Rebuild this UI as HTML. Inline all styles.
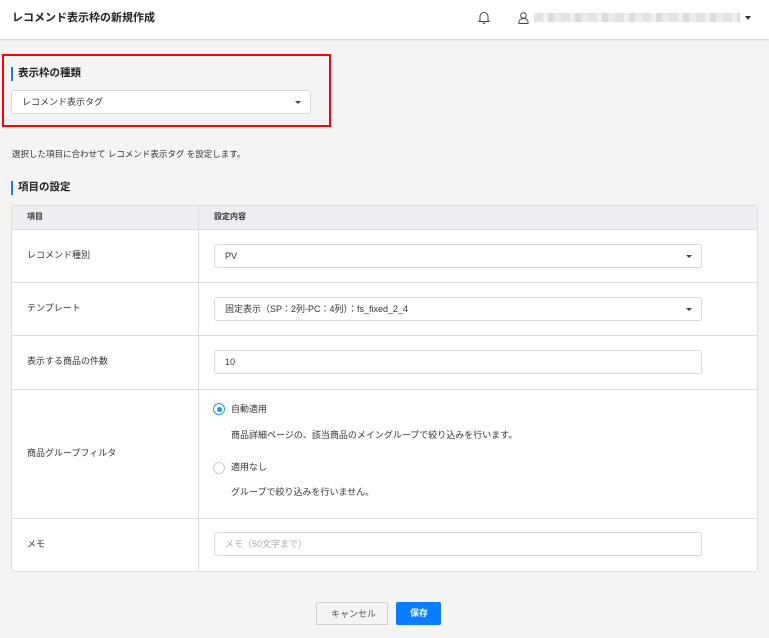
<!DOCTYPE html>
<html><head><meta charset="utf-8"><style>
*{box-sizing:border-box;margin:0;padding:0}
body{width:769px;height:638px;background:#f4f4f4;font-family:"Liberation Sans","Noto Sans CJK JP",sans-serif;color:#333;position:relative;overflow:hidden;font-size:9px}
.a{position:absolute}
.hdr{left:0;top:0;width:769px;height:39px;background:#fff;box-shadow:0 1px 2px rgba(0,0,0,.15)}
.t{white-space:nowrap;line-height:1}
.sel{background:#fff;border:1px solid #d8d8d8;border-radius:3px;height:24px}
.caret{position:absolute;right:9px;top:10px;width:0;height:0;border-left:3px solid transparent;border-right:3px solid transparent;border-top:3px solid #444}
.bar{width:2px;height:14px;background:#1a7cf0}
.h{font-size:10.5px;font-weight:bold;color:#222}
.row{left:12px;width:745px;border-top:1px solid #ddd}
</style></head><body>
<div class="a hdr"></div>
<div class="a t" style="left:12px;top:13px;font-size:11px;font-weight:bold;color:#222">レコメンド表示枠の新規作成</div>
<svg class="a" style="left:478px;top:11px" width="12" height="13" viewBox="0 0 12 13"><path d="M2 9.5V5.5a4 4 0 0 1 8 0v4l1 1H1z M5 11.5a1 1 0 0 0 2 0" fill="none" stroke="#444" stroke-width="1"/></svg>
<svg class="a" style="left:518px;top:12px" width="11" height="12" viewBox="0 0 11 12"><circle cx="5.5" cy="3.5" r="2.8" fill="none" stroke="#444"/><path d="M1 11.5v-2a4.5 3 0 0 1 9 0v2z" fill="none" stroke="#444"/></svg>
<div class="a" style="left:534px;top:13px;width:206px;height:9px;background:repeating-linear-gradient(90deg,#dcdcdc 0 9px,#ececec 9px 14px,#d2d2d2 14px 20px,#e6e6e6 20px 27px);opacity:.8"></div>
<div class="a" style="left:745px;top:16px;border-left:3.5px solid transparent;border-right:3.5px solid transparent;border-top:4px solid #333"></div>

<div class="a" style="left:2px;top:54px;width:329px;height:73px;border:2.5px solid #f00"></div>
<div class="a bar" style="left:11px;top:67px"></div>
<div class="a t h" style="left:18px;top:68px">表示枠の種類</div>
<div class="a sel" style="left:11px;top:90px;width:300px"><span class="a t" style="left:10px;top:7px">レコメンド表示タグ</span><i class="caret"></i></div>

<div class="a t" style="left:12px;top:150px;font-size:8.5px">選択した項目に合わせて レコメンド表示タグ を設定します。</div>
<div class="a bar" style="left:11px;top:181px"></div>
<div class="a t h" style="left:18px;top:182px">項目の設定</div>

<div class="a" style="left:11px;top:205px;width:747px;height:367px;background:#fff;border:1px solid #ddd;border-radius:3px;overflow:hidden">
<div class="a" style="left:0;top:0;width:747px;height:24px;background:#eceef1;border-bottom:1px solid #ddd"></div>
<div class="a" style="left:186px;top:0;width:1px;height:367px;background:#ddd"></div>
</div>
<div class="a t" style="left:27px;top:213px;font-size:8px;font-weight:bold">項目</div>
<div class="a t" style="left:214px;top:213px;font-size:8px;font-weight:bold">設定内容</div>
<div class="a row" style="top:282px"></div>
<div class="a row" style="top:335px"></div>
<div class="a row" style="top:389px"></div>
<div class="a row" style="top:518px"></div>

<div class="a t" style="left:27px;top:251px">レコメンド種別</div>
<div class="a sel" style="left:214px;top:244px;width:488px"><span class="a t" style="left:10px;top:7px">PV</span><i class="caret"></i></div>
<div class="a t" style="left:27px;top:304px">テンプレート</div>
<div class="a sel" style="left:214px;top:297px;width:488px"><span class="a t" style="left:10px;top:7px">固定表示（SP：2列-PC：4列）：fs_fixed_2_4</span><i class="caret"></i></div>
<div class="a t" style="left:27px;top:357px">表示する商品の件数</div>
<div class="a sel" style="left:214px;top:350px;width:488px"><span class="a t" style="left:10px;top:7px">10</span></div>

<div class="a t" style="left:27px;top:449px">商品グループフィルタ</div>
<div class="a" style="left:213px;top:403px;width:12px;height:12px;border:1px solid #2196f3;border-radius:50%"><div class="a" style="left:2.5px;top:2.5px;width:5px;height:5px;background:#2196f3;border-radius:50%"></div></div>
<div class="a t" style="left:231px;top:405px">自動適用</div>
<div class="a t" style="left:231px;top:431px">商品詳細ページの、該当商品のメイングループで絞り込みを行います。</div>
<div class="a" style="left:213px;top:462px;width:12px;height:12px;border:1px solid #ccc;border-radius:50%;background:#fff"></div>
<div class="a t" style="left:231px;top:463px">適用なし</div>
<div class="a t" style="left:231px;top:488px">グループで絞り込みを行いません。</div>

<div class="a t" style="left:27px;top:540px">メモ</div>
<div class="a sel" style="left:214px;top:532px;width:488px"><span class="a t" style="left:10px;top:7px;color:#aaa">メモ（50文字まで）</span></div>

<div class="a" style="left:316px;top:602px;width:72px;height:23px;background:#f4f4f4;border:1px solid #ccc;border-radius:2px"><span class="a t" style="left:14px;top:7px;color:#555">キャンセル</span></div>
<div class="a" style="left:396px;top:602px;width:45px;height:23px;background:#0a7cff;border-radius:2px"><span class="a t" style="left:14px;top:7px;color:#fff;font-weight:bold">保存</span></div>
</body></html>
